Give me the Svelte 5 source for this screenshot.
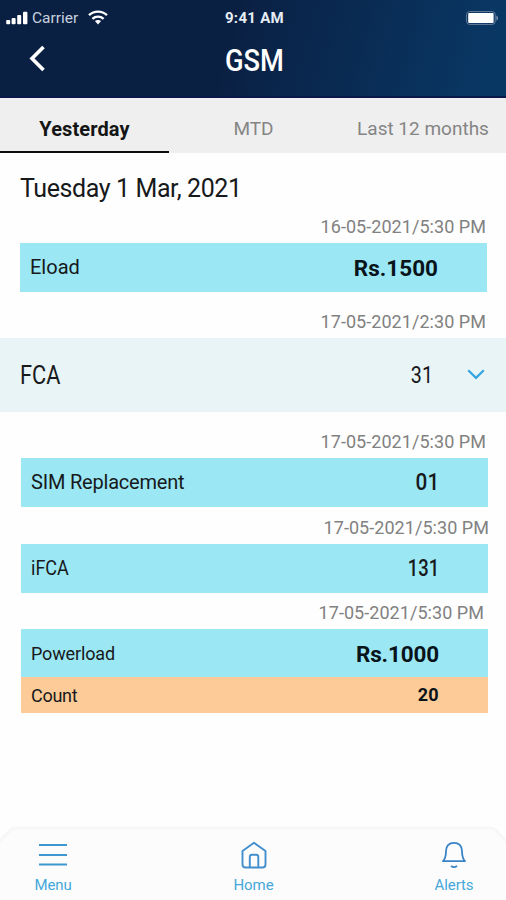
<script>
    let tabs = ['Yesterday', 'MTD', 'Last 12 months'];
    let activeTab = 'Yesterday';
</script>

<div class="screen">
    <header>
        <div class="status">
            <div class="carrier">
                <svg width="23" height="14" viewBox="0 0 23 14" fill="#fff">
                    <rect x="0.2" y="9" width="4" height="4.2" rx="1" />
                    <rect x="5.6" y="7" width="4" height="6.2" rx="1" />
                    <rect x="11.2" y="4" width="4" height="9.2" rx="1" />
                    <rect x="17" y="0.7" width="4.4" height="12.5" rx="1" />
                </svg>
                <span>Carrier</span>
                <svg class="wifi" width="20" height="15" viewBox="0 0 20 15" fill="none" stroke="#fff" stroke-width="2.4">
                    <path d="M1 5.2C6.2 .4 13.8 .4 19 5.2" />
                    <path d="M4.4 8.8C7.6 5.9 12.4 5.9 15.6 8.8" />
                    <path d="M6.9 11.1C8.8 9.7 11.2 9.7 13.1 11.1L10 14.5Z" fill="#fff" stroke="none" />
                </svg>
            </div>
            <span class="time">9:41 AM</span>
            <svg class="battery" width="33" height="14" viewBox="0 0 33 14">
                <rect x="0.6" y="0.6" width="28.6" height="12.8" rx="3" fill="none" stroke="#7286a2" stroke-width="0.9" />
                <rect x="2.2" y="2" width="25.4" height="10" rx="1" fill="#fff" />
                <path d="M30.4 4.4C32.5 5.3 32.5 8.7 30.4 9.6Z" fill="#8092ab" />
            </svg>
        </div>
        <div class="title">
            <svg width="18" height="28" viewBox="0 0 18 28" fill="none" stroke="#fff" stroke-width="3.6">
                <path d="M16.500 1.900L5 13.500L16.500 25.100" />
            </svg>
            <h1>GSM</h1>
        </div>
    </header>

    <nav class="tabs">
        {#each tabs as tab}
            <button class:active={tab === activeTab} on:click={() => activeTab = tab}>{tab}</button>
        {/each}
    </nav>

    <main>
        <h2>Tuesday 1 Mar, 2021</h2>

        <p class="date first">16-05-2021/5:30 PM</p>
        <div class="row eload">
            <span>Eload</span>
            <strong>Rs.1500</strong>
        </div>

        <p class="date second">17-05-2021/2:30 PM</p>
        <div class="group">
            <span class="fca">FCA</span>
            <span class="total">31</span>
            <svg width="18" height="12" viewBox="0 0 18 12" fill="none" stroke="#36a6e0" stroke-width="2.2">
                <path d="M1.2 1.2L9 8.900L16.8 1.200" />
            </svg>
        </div>

        <p class="date third">17-05-2021/5:30 PM</p>
        <div class="row">
            <span class="sim">SIM Replacement</span>
            <span class="number">01</span>
        </div>

        <p class="date fourth">17-05-2021/5:30 PM</p>
        <div class="row">
            <span class="ifca">iFCA</span>
            <span class="number wide">131</span>
        </div>

        <p class="date fifth">17-05-2021/5:30 PM</p>
        <div class="row powerload">
            <span>Powerload</span>
            <strong>Rs.1000</strong>
        </div>
        <div class="row count">
            <span>Count</span>
            <strong>20</strong>
        </div>
    </main>

    <footer>
        <svg class="sheet" width="506" height="74" viewBox="0 0 506 74">
            <path d="M-3 18L10 4.500Q12.500 2 16 2H490Q493.500 2 496 4.500L509 18V77H-3Z" fill="#fcfcfc" stroke="#f7f7f7" stroke-width="3" />
        </svg>
        <div class="item">
            <svg width="30" height="30" viewBox="0 0 30 30" fill="none" stroke="#3f97d0" stroke-width="2">
                <path d="M1 5H29M1 15H29M1 24.500H29" />
            </svg>
            <span>Menu</span>
        </div>
        <div class="item">
            <svg width="30" height="30" viewBox="0 0 30 30" fill="none" stroke="#438fcd" stroke-width="1.9" stroke-linejoin="round">
                <path d="M3.5 11L15 2.800L26.500 11V24.500Q26.500 27.500 23.500 27.500H6.500Q3.500 27.500 3.500 24.500Z" />
                <path d="M10.800 27V17Q10.800 14.800 13 14.800H17Q19.300 14.800 19.300 17V27" />
            </svg>
            <span>Home</span>
        </div>
        <div class="item alerts">
            <svg width="30" height="30" viewBox="0 0 30 30" fill="none" stroke="#3983c7" stroke-width="1.8" stroke-linejoin="round">
                <path d="M4 21.200C7 18 6.8 15.500 7 11C7.3 6 10.2 2.900 15 2.900S22.7 6 23 11C23.2 15.500 23 18 26 21.200Z" />
                <path d="M12 25.800Q15 28.500 18 25.800" />
            </svg>
            <span>Alerts</span>
        </div>
    </footer>
</div>

<style>
    :global(body) {
        margin: 0;
        background: #fefefe;
    }

    .screen {
        width: 506px;
        height: 900px;
        display: flex;
        flex-direction: column;
        overflow: hidden;
        font-family: Roboto, "Noto Sans", sans-serif;
        color: #17191b;
        white-space: nowrap;
    }

    header {
        height: 98px;
        box-sizing: border-box;
        border-bottom: 2px solid #09194a;
        background: linear-gradient(105deg, #0a2043 45%, #093764 95%);
        color: #fff;
    }

    .status {
        height: 35px;
        padding: 0 7px 0 6px;
        display: grid;
        grid-template-columns: 1fr auto 1fr;
        align-items: center;
    }

    .carrier {
        display: flex;
        align-items: center;
        font-size: 15.5px;
        color: #c7d1df;
    }

    .carrier span {
        margin-left: 3px;
        width: 47px;
    }

    .wifi {
        margin-left: 9px;
    }

    .time {
        padding-left: 4px;
        font-size: 15px;
        font-weight: 700;
        letter-spacing: 0.3px;
        color: #e6edf5;
    }

    .battery {
        justify-self: end;
    }

    .title {
        height: 50px;
        padding: 0 27px;
        display: grid;
        grid-template-columns: 1fr auto 1fr;
        align-items: center;
    }

    .title svg {
        margin-top: -3px;
    }

    h1 {
        margin: 0 0 0 2px;
        font-size: 31px;
        font-weight: 500;
        transform: scaleX(0.88);
    }

    .tabs {
        height: 55px;
        display: grid;
        grid-template-columns: 169px 169px 168px;
        background: #efefef;
    }

    .tabs button {
        padding: 8px 0 0;
        border: none;
        border-bottom: 2px solid transparent;
        background: none;
        font: inherit;
        font-size: 19px;
        color: #858585;
    }

    .tabs button:last-child {
        padding-left: 2px;
    }

    .tabs button.active {
        border-bottom-color: #0c0c0d;
        color: #151515;
        font-size: 20px;
        font-weight: 700;
        letter-spacing: 0.1px;
    }

    main {
        flex: 1;
    }

    h2 {
        margin: 0;
        height: 60px;
        padding: 6px 20px 0;
        font-size: 25px;
        line-height: 60px;
        font-weight: 400;
        letter-spacing: -0.4px;
    }

    .date {
        margin: 0;
        height: 30px;
        line-height: 28px;
        padding-right: 20px;
        text-align: right;
        font-size: 18px;
        letter-spacing: 0.05px;
        color: #818181;
    }

    .first {
        margin-top: -6px;
    }

    .second {
        margin-top: 16px;
    }

    .third {
        margin-top: 16px;
    }

    .fourth {
        margin-top: 7px;
        padding-right: 17px;
    }

    .fifth {
        margin-top: 6px;
        padding-right: 22px;
    }

    .row {
        height: 49px;
        margin: 0 18px 0 21px;
        padding: 0 49px 2px 10px;
        display: flex;
        align-items: center;
        justify-content: space-between;
        box-sizing: border-box;
        background: #9be7f3;
        font-size: 20px;
    }

    .row.eload {
        margin: 0 19px 0 20px;
    }

    .sim {
        letter-spacing: -0.2px;
    }

    .ifca {
        transform: scaleX(0.9);
        transform-origin: left;
    }

    .row strong {
        padding-top: 2px;
        font-size: 22.5px;
        font-weight: 700;
        color: #08131a;
    }

    .number {
        padding-top: 2px;
        font-size: 23px;
        font-weight: 500;
        transform: scaleX(0.9);
        transform-origin: right;
    }

    .number.wide {
        transform: scaleX(0.8);
    }

    .row.powerload {
        height: 48px;
        padding-bottom: 0;
        font-size: 18px;
        letter-spacing: -0.15px;
    }

    .row.count {
        height: 36px;
        background: #fdcb97;
        font-size: 18px;
        letter-spacing: -0.3px;
        padding-bottom: 0;
    }

    .row.count strong {
        padding: 0 0 2px;
        font-size: 18px;
        letter-spacing: 0.3px;
    }

    .group {
        height: 74px;
        padding: 0 21px 0 20px;
        display: flex;
        align-items: center;
        background: #e8f4f5;
        font-size: 25px;
    }

    .fca {
        transform: scaleX(0.87);
        transform-origin: left;
    }

    .total {
        margin-left: auto;
        margin-right: 34px;
        font-size: 24px;
        transform: scaleX(0.82);
        transform-origin: right;
    }

    footer {
        position: relative;
        height: 74px;
        padding: 14px 15px 0;
        display: flex;
        justify-content: space-between;
        box-sizing: border-box;
    }

    .sheet {
        position: absolute;
        left: 0;
        top: 0;
    }

    .item {
        position: relative;
        width: 76px;
        display: flex;
        flex-direction: column;
        align-items: center;
        gap: 5px;
        font-size: 15px;
        line-height: 20px;
        letter-spacing: -0.1px;
        color: #45a8d9;
    }

    .item.alerts {
        margin-right: -1px;
    }
</style>
